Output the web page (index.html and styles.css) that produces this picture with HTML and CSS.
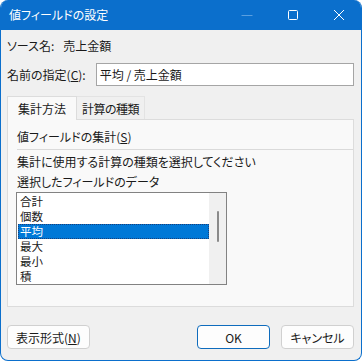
FILE: index.html
```html
<!DOCTYPE html>
<html lang="ja">
<head>
  <meta charset="UTF-8">
  <title>値フィールドの設定</title>
  <link rel="stylesheet" href="styles.css">
</head>
<body>
  <div class="window">
    <!-- タイトルバー -->
    <div class="titlebar">
      <span class="title">値フィールドの設定</span>
      <div class="controls">
        <span class="ctl ctl-min"><svg width="12" height="12" viewBox="0 0 12 12"><path d="M0.5 6.5h11" stroke="#5a9fe0" stroke-width="1"/></svg></span>
        <span class="ctl ctl-max"><svg width="12" height="12" viewBox="0 0 12 12"><rect x="1.5" y="1.5" width="9" height="9" rx="1" fill="none" stroke="#fff" stroke-width="1"/></svg></span>
        <span class="ctl ctl-close"><svg width="12" height="12" viewBox="0 0 12 12"><path d="M1 1l10 10M11 1L1 11" stroke="#fff" stroke-width="1"/></svg></span>
      </div>
    </div>

    <div class="content">
      <div class="row source">ソース名:<span class="source-value">売上金額</span></div>

      <div class="row name">
        <label>名前の指定(<u>C</u>):</label>
        <div class="input">平均 / 売上金額</div>
      </div>

      <!-- タブ -->
      <div class="tabs">
        <div class="tab active">集計方法</div>
        <div class="tab">計算の種類</div>
      </div>
      <div class="panel">
        <div class="group-title">値フィールドの集計(<u>S</u>)</div>
        <div class="sep"></div>
        <p class="desc">集計に使用する計算の種類を選択してください</p>
        <p class="desc">選択したフィールドのデータ</p>
        <div class="listbox">
          <ul class="items">
            <li>合計</li>
            <li>個数</li>
            <li class="selected">平均</li>
            <li>最大</li>
            <li>最小</li>
            <li>積</li>
          </ul>
          <div class="scrollbar"><div class="thumb"></div></div>
        </div>
      </div>

      <div class="buttons">
        <button class="btn">表示形式(<u>N</u>)</button>
        <div class="spacer"></div>
        <button class="btn btn-default">OK</button>
        <button class="btn">キャンセル</button>
      </div>
    </div>
  </div>
</body>
</html>
```

FILE: styles.css
```css
/* 基本 */
body {
  margin: 0;
  width: 362px;
  height: 361px;
  background: #fff;
  font-family: "Noto Sans CJK JP", "Noto Sans", sans-serif;
  font-size: 12px;
  font-feature-settings: "palt";
  color: #1a1a1a;
}

.window {
  width: 362px;
  height: 361px;
  box-sizing: border-box;
  border: 1px solid #0b6fcc;
  border-top: none;
  border-radius: 8px;
  overflow: hidden;
  background: #f0f0f0;
  display: flex;
  flex-direction: column;
}

/* タイトルバー */
.titlebar {
  height: 30px;
  flex: none;
  background: #0b6fcc;
  display: flex;
  align-items: center;
  padding-left: 9px;
  color: #fff;
  margin: 0 -1px;
}

.title {
  flex: 1;
  font-size: 12px;
  margin-top: -1px;
}

.controls {
  display: flex;
  align-items: center;
  height: 100%;
}

.ctl {
  width: 46px;
  height: 30px;
  display: flex;
  align-items: center;
  justify-content: center;
}

/* 内容 */
.content {
  flex: 1;
  display: flex;
  flex-direction: column;
  padding: 0 7px 0 6px;
}

.row {
  display: flex;
  align-items: center;
}

.source {
  height: 16px;
  margin-top: 7px;
}

.source-value {
  margin-left: 9px;
}

.name {
  margin-top: 10px;
  gap: 10px;
}

.input {
  flex: 1;
  height: 21px;
  line-height: 21px;
  border: 1px solid #a5a5a5;
  background: #fff;
  padding-left: 3px;
}

/* タブ */
.tabs {
  display: flex;
  margin-top: 9px;
  height: 24px;
}

.tab {
  padding: 0 5px;
  line-height: 23px;
  border: 1px solid #e3e3e3;
  border-bottom: none;
  border-left: none;
  background: #f0f0f0;
  margin-top: 1px;
  letter-spacing: -0.5px;
}

.tab.active {
  background: #f9f9f9;
  border: 1px solid #dcdcdc;
  border-bottom: none;
  margin-top: 0;
  padding: 0 10px;
  letter-spacing: 0;
  position: relative;
  top: 1px;
}

.panel {
  height: 178px;
  border: 1px solid #dcdcdc;
  background: #f9f9f9;
  padding: 8px 0 0 9px;
}

.group-title {
  line-height: 18px;
}

.sep {
  height: 1px;
  background: #dadada;
  margin: 3px 0 2px 0;
}

.desc {
  margin: 0;
  line-height: 20px;
}

/* リストボックス */
.listbox {
  margin: 0 0 0 -1px;
  width: 209px;
  height: 91px;
  border: 1px solid #828282;
  background: #fff;
  display: flex;
}

.items {
  list-style: none;
  margin: 0;
  padding: 1px 0 0 1px;
  flex: 1;
  font-size: 11.5px;
}

.items li {
  height: 15px;
  line-height: 15px;
  padding-left: 2px;
}

.items li.selected {
  background: #0078d7;
  color: #fff;
  outline: 1px dotted #1b3f7a;
  outline-offset: -1px;
}

.scrollbar {
  width: 17px;
  background: #f0f0f0;
  display: flex;
  justify-content: center;
}

.thumb {
  width: 2px;
  height: 31px;
  margin-top: 18px;
  background: #8a8a8a;
  border-radius: 1px;
}

/* ボタン */
.buttons {
  display: flex;
  gap: 11px;
  margin-top: 18px;
}

.spacer {
  flex: 1;
}

.btn {
  font: inherit;
  font-feature-settings: "palt";
  height: 24px;
  min-width: 73px;
  padding: 0 8px;
  border: 1px solid #d0d0d0;
  border-radius: 4px;
  background: #fdfdfd;
  color: #1a1a1a;
}

.btn-default {
  border-color: #0f6cbd;
}
```
